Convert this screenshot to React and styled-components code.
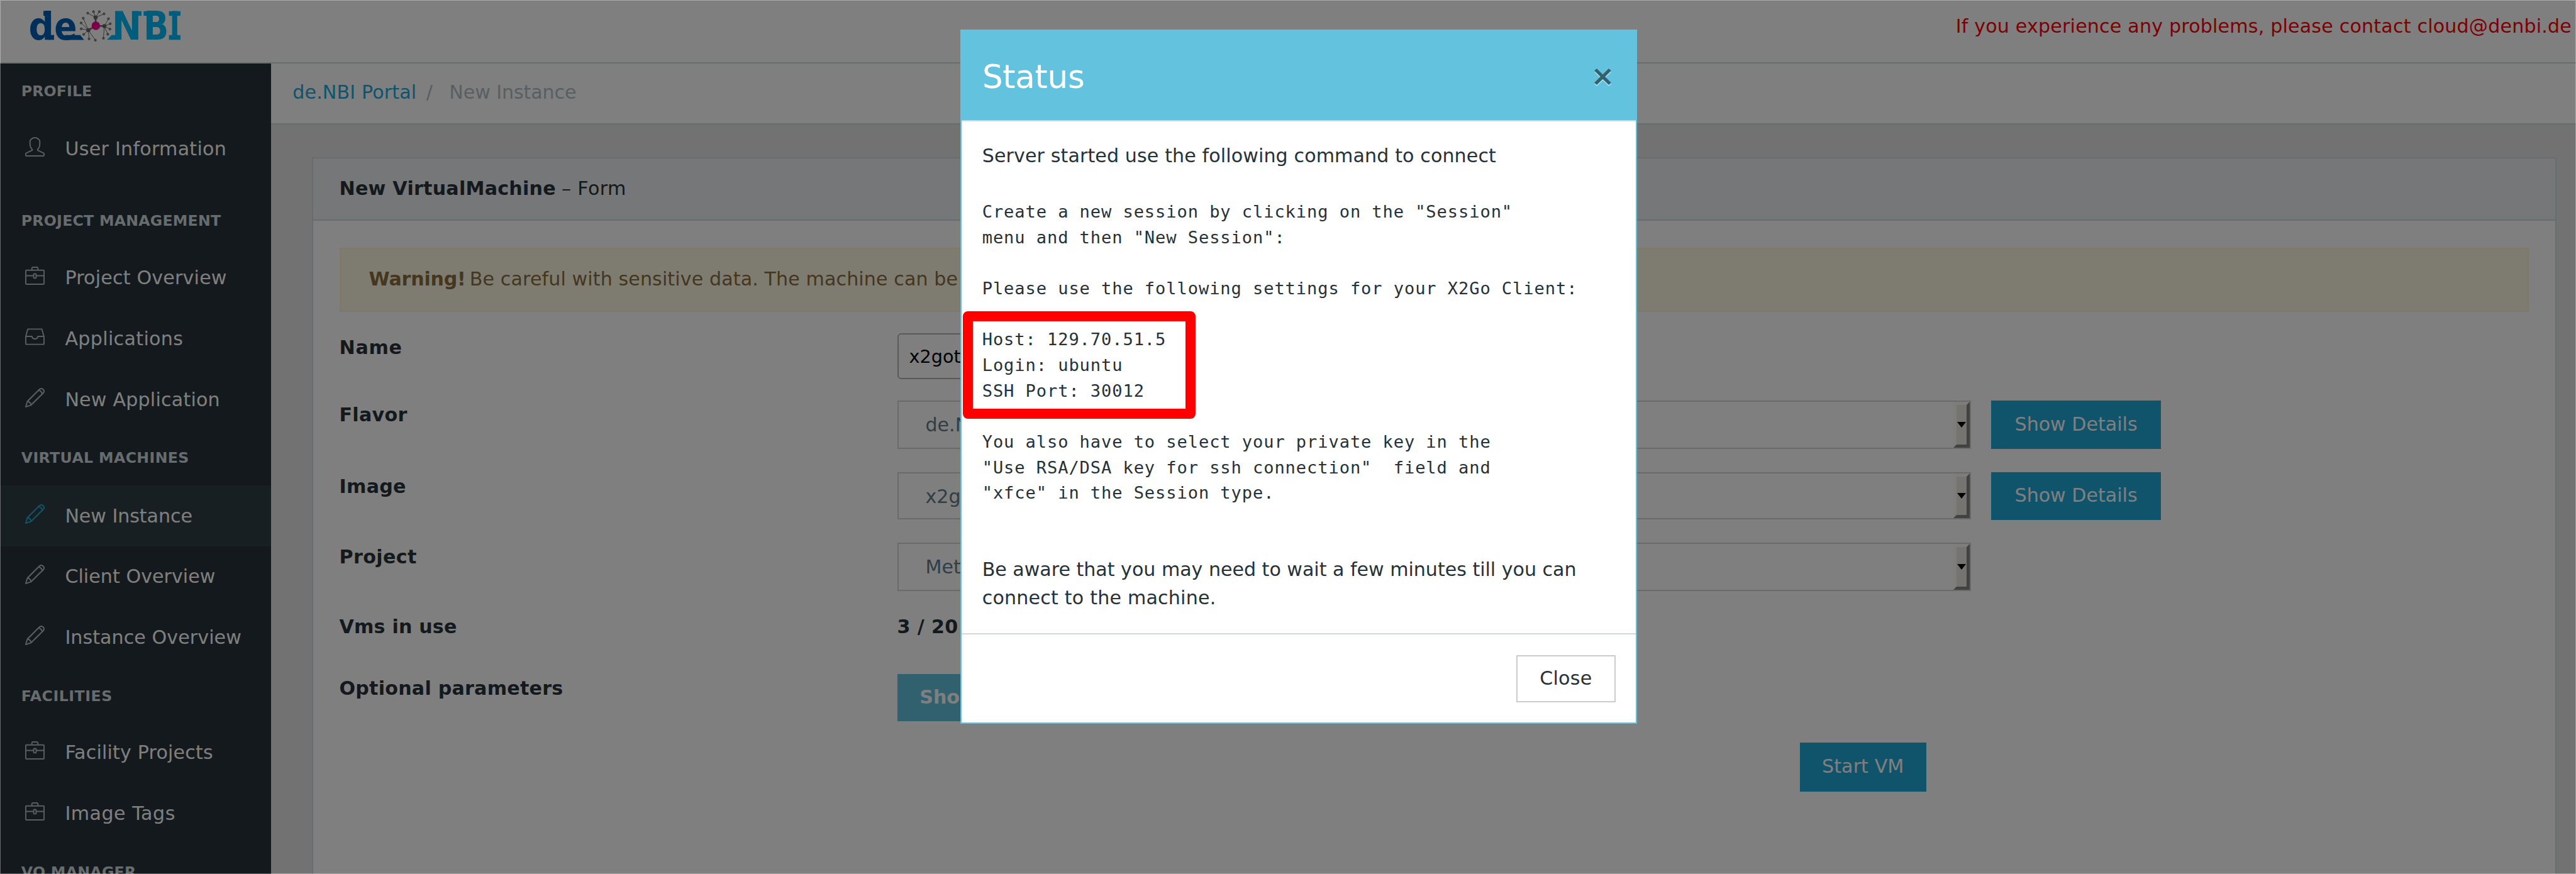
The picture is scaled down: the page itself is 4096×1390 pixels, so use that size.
import React from "react";
import styled, { createGlobalStyle } from "styled-components";
import { SlUser, SlBriefcase, SlDrawer, SlPencil } from "react-icons/sl";

const sans = '"DejaVu Sans", "Noto Sans", sans-serif';
const mono = '"DejaVu Sans Mono", "Liberation Mono", monospace';

const GlobalStyle = createGlobalStyle`
  *, *::before, *::after { box-sizing: border-box; }
  html, body { margin: 0; padding: 0; }
  body {
    background: #e4e5e6;
    color: #263238;
    font-family: ${sans};
    font-size: 30.1px;
    line-height: 45px;
    overflow: hidden;
  }
`;

const Text = styled.span`
  letter-spacing: ${(p) => p.$ls || 0}px;
  white-space: pre;
`;

const Page = styled.div`
  display: flex;
  flex-direction: column;
  width: 4096px;
  height: 1390px;
  overflow: hidden;
`;

const Header = styled.header`
  flex: none;
  display: flex;
  justify-content: space-between;
  align-items: flex-start;
  height: 101px;
  padding: 13px 7px 0 46px;
  background: #fff;
  border-bottom: 2px solid #cfd8dc;
`;

const LogoArt = styled.svg`
  display: block;
  width: 243.8px;
  height: 55.7px;
  overflow: visible;
`;

const ContactNotice = styled.div`
  padding-top: 6px;
  color: #ff0000;
`;

const Columns = styled.div`
  display: flex;
  flex: 1;
  min-height: 0;
`;

const Sidebar = styled.nav`
  flex: none;
  width: 430.5px;
  background: #263238;
  overflow: hidden;
`;

const NavTitle = styled.div`
  height: ${(p) => p.$h}px;
  padding: ${(p) => p.$pt || 0}px 0 0 33.8px;
  box-sizing: content-box;
  font-size: 23.66px;
  font-weight: 700;
  line-height: 88px;
  color: #cfd8dc;
`;

const NavItem = styled.a`
  display: flex;
  align-items: center;
  height: 96.8px;
  padding: 0 0 1px 34.4px;
  color: #fff;
  background: ${(p) => (p.$active ? "#313f46" : "transparent")};
`;

const NavIcon = styled.span`
  display: flex;
  justify-content: center;
  width: 43px;
  margin: 0 26px 6px 0;
  color: ${(p) => (p.$active ? "#20a8d8" : "#b0bec5")};
  svg { width: 31px; height: 31px; }
`;

const Main = styled.main`
  flex: 1;
  min-width: 0;
  display: flex;
  flex-direction: column;
`;

const Breadcrumb = styled.div`
  flex: none;
  display: flex;
  height: 97px;
  padding: 23px 0 0 34.8px;
  background: #fff;
  border-bottom: 2px solid #cfd8dc;
  color: #b0bec5;
`;

const Crumb = styled.a`
  color: #20a8d8;
`;

const Separator = styled.span`
  margin: 0 26.3px 0 15.6px;
`;

const Card = styled.section`
  flex: 1;
  display: flex;
  flex-direction: column;
  margin: 52px 31px 0 65px;
  background: #fff;
  border: 2px solid #cfd8dc;
  border-bottom: 0;
`;

const CardHeader = styled.div`
  display: flex;
  gap: 9px;
  height: 98.5px;
  padding: 24.5px 0 0 42px;
  background: #eceff1;
  border-bottom: 2px solid #cfd8dc;
`;

const CardBody = styled.div`
  padding: 43px 42px 0 42px;
`;

const Alert = styled.div`
  display: flex;
  gap: 6.2px;
  height: 102px;
  margin-bottom: 34px;
  padding: 25.5px 0 0 45px;
  background: #fcf8e3;
  border: 2px solid #faf2cc;
  color: #8a6d3b;
`;

const FormRow = styled.div`
  display: grid;
  grid-template-columns: 887px auto;
  height: ${(p) => p.$h}px;
  font-weight: 700;
`;

const Controls = styled.div`
  display: flex;
  align-items: flex-start;
  gap: 32.6px;
`;

const NameInput = styled.div`
  width: 520px;
  height: 73px;
  padding: 0 17px;
  border: 2px solid #b3b3b0;
  border-radius: 6px;
  font-size: 28.7px;
  font-weight: 400;
  line-height: 70px;
  color: #000;
`;

const SelectBox = styled.div`
  display: flex;
  justify-content: space-between;
  width: 1707px;
  height: ${(p) => p.$h || 77}px;
  padding-left: 43px;
  background: #fff;
  border: 2px solid #d4d4d4;
  color: #607d8b;
  font-weight: 400;
  line-height: 73px;
`;

const SelectArrow = styled.span`
  display: flex;
  align-items: center;
  justify-content: center;
  width: 26px;
  background: #eae8e2;
  border: 5px solid;
  border-color: #fbfbf4 #858585 #858585 #fbfbf4;
  svg { flex: none; width: 14px; height: 9px; }
`;

const Button = styled.div`
  display: flex;
  align-items: center;
  justify-content: center;
  width: ${(p) => p.$w}px;
  height: ${(p) => p.$h}px;
  padding-bottom: 2px;
  background: ${(p) => (p.$info ? "#63c2de" : "#20a8d8")};
  color: #fff;
  font-weight: ${(p) => (p.$info ? 700 : 400)};
`;

const Submit = styled.div`
  display: flex;
  padding-left: 2322px;
`;

const Backdrop = styled.div`
  position: fixed;
  inset: 0;
  background: rgba(0, 0, 0, 0.5);
  border: 1px solid rgba(255, 255, 255, 0.35);
`;

const Modal = styled.div`
  position: fixed;
  top: 47px;
  left: 1527.4px;
  width: 1076px;
  height: 1104px;
  display: flex;
  flex-direction: column;
  background: #fff;
  border: 2px solid #63c2de;
`;

const ModalHeader = styled.div`
  flex: none;
  display: flex;
  align-items: center;
  justify-content: space-between;
  height: 144px;
  padding: 4px 34px 0 32.5px;
  background: #63c2de;
  border-bottom: 2px solid #cfd8dc;
  color: #fff;
`;

const ModalTitle = styled.h4`
  margin: 0;
  font-size: 51.6px;
  font-weight: 400;
  line-height: 60px;
`;

const CloseMark = styled.span`
  margin-bottom: 2px;
  font-size: 45.2px;
  font-weight: 700;
  line-height: 46px;
  color: #000;
  text-shadow: 0 2px 0 #fff;
  opacity: 0.5;
`;

const ModalBody = styled.div`
  flex: 1;
  padding: 32px 30px 0 32.3px;
`;

const Paragraph = styled.p`
  display: flex;
  flex-direction: column;
  margin: 0;
`;

const Instructions = styled.div`
  margin: 47px 0 78px;
  font-family: ${mono};
  font-size: 27.1px;
  line-height: 40.67px;
  letter-spacing: 0.9px;
`;

const CodeLine = styled.div`
  height: 40.67px;
  white-space: pre;
`;

const ModalFooter = styled.div`
  flex: none;
  display: flex;
  justify-content: flex-end;
  height: 142.5px;
  padding: 33px 32.5px 0 0;
  border-top: 2px solid #cfd8dc;
`;

const CloseButton = styled.div`
  width: 158px;
  height: 75px;
  border: 2px solid #ccc;
  line-height: 70px;
  text-align: center;
`;

const Highlight = styled.div`
  position: fixed;
  top: 495px;
  left: 1530.5px;
  width: 370px;
  height: 171px;
  border: 16px solid #ff0000;
  border-radius: 8px;
`;

/* Each hub of the network mark with the small satellites linked to it. */
const hubs = [
  { x: 672, y: 147, tips: [[607, 111], [655, 99], [703, 99], [742, 117]] },
  { x: 745, y: 219, tips: [[779, 157], [793, 199], [791, 243], [773, 286], [737, 319]] },
  { x: 612, y: 252, tips: [[570, 153], [552, 192], [553, 241], [574, 287], [618, 324], [670, 335]] },
];

function Logo() {
  const face = { fontFamily: "DejaVu Sans", fontWeight: 700 };
  return (
    <LogoArt viewBox="120 70 1270 290" preserveAspectRatio="none">
      <g fill="#0060b4" fontSize="316" {...face}>
        <text transform="translate(117 332) scale(.93 1)">d</text>
        <rect x="240" y="93" width="40" height="40" />
        <rect x="280" y="292" width="48" height="40" />
        <text transform="translate(330 332) scale(.88 1)">e</text>
        <path d="M420 292H545L577 333H420Z" />
      </g>
      <g fill="#00b8f6" fontSize="325" {...face}>
        <path d="M806 292H860V332H766Z" />
        <text transform="translate(808 332) scale(.9 1)">N</text>
        <rect x="1000" y="95" width="52" height="38" />
        <rect x="1070" y="95" width="45" height="38" />
        <text transform="translate(1070 332) scale(.84 1)">B</text>
        <text transform="translate(1285 332) scale(.69 1)">I</text>
        <rect x="1280" y="95" width="95" height="38" />
        <rect x="1280" y="293" width="95" height="39" />
      </g>
      {hubs.map((h) => (
        <g key={h.x} stroke="#666" fill="#666">
          <path d={`M674 216L${h.x} ${h.y}`} strokeWidth="13" />
          {h.tips.map(([x, y]) => (
            <g key={x}>
              <path d={`M${h.x} ${h.y}L${x} ${y}`} strokeWidth="5" />
              <circle cx={x} cy={y} r="9" fill="#858585" strokeWidth="4" />
            </g>
          ))}
          <circle cx={h.x} cy={h.y} r="17" stroke="none" />
        </g>
      ))}
      <circle cx="674" cy="216" r="35" fill="#f40092" />
    </LogoArt>
  );
}

function NavLink({ icon: Icon, label, ls, active }) {
  return (
    <NavItem $active={active}>
      <NavIcon $active={active}><Icon /></NavIcon>
      <Text $ls={ls}>{label}</Text>
    </NavItem>
  );
}

function Select({ value, h }) {
  return (
    <SelectBox $h={h}>
      <Text>{value}</Text>
      <SelectArrow>
        <svg viewBox="0 0 14 9"><path d="M0 0H14L7 9Z" fill="#000" /></svg>
      </SelectArrow>
    </SelectBox>
  );
}

const commandLines = [
  'Create a new session by clicking on the "Session"',
  'menu and then "New Session":',
  "",
  "Please use the following settings for your X2Go Client:",
  "",
  "Host: 129.70.51.5",
  "Login: ubuntu",
  "SSH Port: 30012",
  "",
  "You also have to select your private key in the",
  '"Use RSA/DSA key for ssh connection"  field and',
  '"xfce" in the Session type.',
];

export default function App() {
  return (
    <>
      <GlobalStyle />
      <Page>
        <Header>
          <Logo />
          <ContactNotice>
            <Text $ls={0.19}>If you experience any problems, please contact cloud@denbi.de</Text>
          </ContactNotice>
        </Header>
        <Columns>
          <Sidebar>
            <NavTitle $h={88}><Text $ls={0.1}>PROFILE</Text></NavTitle>
            <NavLink icon={SlUser} label="User Information" ls={0.27} />
            <NavTitle $h={87} $pt={21}><Text $ls={0.22}>PROJECT MANAGEMENT</Text></NavTitle>
            <NavLink icon={SlBriefcase} label="Project Overview" ls={0.19} />
            <NavLink icon={SlDrawer} label="Applications" ls={0.34} />
            <NavLink icon={SlPencil} label="New Application" ls={0.21} />
            <NavTitle $h={88}><Text $ls={0.35}>VIRTUAL MACHINES</Text></NavTitle>
            <NavLink icon={SlPencil} label="New Instance" ls={-0.05} active />
            <NavLink icon={SlPencil} label="Client Overview" ls={0.05} />
            <NavLink icon={SlPencil} label="Instance Overview" ls={0.07} />
            <NavTitle $h={86.5}><Text $ls={0.5}>FACILITIES</Text></NavTitle>
            <NavLink icon={SlBriefcase} label="Facility Projects" ls={0.18} />
            <NavLink icon={SlBriefcase} label="Image Tags" ls={0.5} />
            <NavTitle $h={88}><Text $ls={0.27}>VO MANAGER</Text></NavTitle>
          </Sidebar>
          <Main>
            <Breadcrumb>
              <Crumb><Text $ls={0.13}>de.NBI Portal</Text></Crumb>
              <Separator>/</Separator>
              <Text $ls={-0.08}>New Instance</Text>
            </Breadcrumb>
            <Card>
              <CardHeader>
                <Text as="strong" $ls={0.25}>New VirtualMachine</Text>
                <Text $ls={0.4}>– Form</Text>
              </CardHeader>
              <CardBody>
                <Alert>
                  <Text as="strong" $ls={-0.2}>Warning!</Text>
                  <Text $ls={0.11}>Be careful with sensitive data. The machine can be</Text>
                </Alert>
                <FormRow $h={107.6}>
                  <Text $ls={0.7}>Name</Text>
                  <Controls><NameInput>x2got</NameInput></Controls>
                </FormRow>
                <FormRow $h={113.8}>
                  <Text $ls={0.3}>Flavor</Text>
                  <Controls>
                    <Select value="de.N" />
                    <Button $w={270} $h={77.4}><Text>Show Details</Text></Button>
                  </Controls>
                </FormRow>
                <FormRow $h={112.4}>
                  <Text $ls={0.3}>Image</Text>
                  <Controls>
                    <Select value="x2got" h={75.4} />
                    <Button $w={270} $h={75.7}><Text>Show Details</Text></Button>
                  </Controls>
                </FormRow>
                <FormRow $h={111.2}>
                  <Text $ls={0.39}>Project</Text>
                  <Controls><Select value="Met" /></Controls>
                </FormRow>
                <FormRow $h={97.2}>
                  <Text $ls={0.21}>Vms in use</Text>
                  <Text $ls={0.4}>3 / 20</Text>
                </FormRow>
                <FormRow $h={109.3}>
                  <Text $ls={0.24}>Optional parameters</Text>
                  <Button $info $w={163} $h={75.4}><Text>Show</Text></Button>
                </FormRow>
                <Submit>
                  <Button $w={201.4} $h={78}><Text $ls={0.09}>Start VM</Text></Button>
                </Submit>
              </CardBody>
            </Card>
          </Main>
        </Columns>
      </Page>
      <Backdrop />
      <Modal>
        <ModalHeader>
          <ModalTitle><Text $ls={-0.3}>Status</Text></ModalTitle>
          <CloseMark>×</CloseMark>
        </ModalHeader>
        <ModalBody>
          <Paragraph>
            <Text $ls={0.11}>Server started use the following command to connect</Text>
          </Paragraph>
          <Instructions>
            {commandLines.map((line, i) => <CodeLine key={i}>{line}</CodeLine>)}
          </Instructions>
          <Paragraph>
            <Text $ls={-0.02}>Be aware that you may need to wait a few minutes till you can</Text>
            <Text $ls={0.2}>connect to the machine.</Text>
          </Paragraph>
        </ModalBody>
        <ModalFooter>
          <CloseButton><Text $ls={0.3}>Close</Text></CloseButton>
        </ModalFooter>
      </Modal>
      <Highlight />
    </>
  );
}
